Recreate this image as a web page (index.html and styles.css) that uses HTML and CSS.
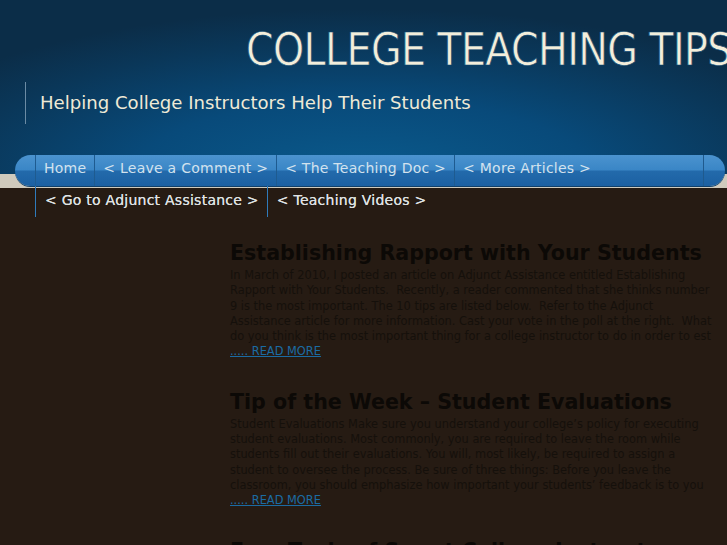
FILE: index.html
```html
<!DOCTYPE html>
<html lang="en">
<head>
<meta charset="utf-8">
<title>College Teaching Tips</title>
<link rel="stylesheet" href="styles.css">
</head>
<body>
<header class="masthead">
  <h1 class="site-title">COLLEGE TEACHING TIPS</h1>
  <p class="tagline">Helping College Instructors Help Their Students</p>
</header>
<div class="band"></div>
<nav class="menu">
  <ul class="menu-list">
    <li class="menu-item top"><a href="#">Home</a></li>
    <li class="menu-item top"><a href="#">&lt; Leave a Comment &gt;</a></li>
    <li class="menu-item top"><a href="#">&lt; The Teaching Doc &gt;</a></li>
    <li class="menu-item top"><a href="#">&lt; More Articles &gt;</a></li>
    <li class="menu-item low"><a href="#">&lt; Go to Adjunct Assistance &gt;</a></li>
    <li class="menu-item low"><a href="#">&lt; Teaching Videos &gt;</a></li>
  </ul>
</nav>
<div class="layout">
  <aside class="sidebar"></aside>
  <main class="content">
    <article class="post">
      <h2 class="post-title">Establishing Rapport with Your Students</h2>
      <p class="excerpt">In March of 2010, I posted an article on Adjunct Assistance entitled Establishing Rapport with Your Students.&nbsp; Recently, a reader commented that she thinks number 9 is the most important. The 10 tips are listed below.&nbsp; Refer to the Adjunct Assistance article for more information. Cast your vote in the poll at the right.&nbsp; What do you think is the most important thing for a college instructor to do in order to est</p>
      <a class="more" href="#">..... READ MORE</a>
    </article>
    <article class="post">
      <h2 class="post-title">Tip of the Week – Student Evaluations</h2>
      <p class="excerpt">Student Evaluations Make sure you understand your college’s policy for executing student evaluations. Most commonly, you are required to leave the room while students fill out their evaluations. You will, most likely, be required to assign a student to oversee the process. Be sure of three things: Before you leave the classroom, you should emphasize how important your students’ feedback is to you</p>
      <a class="more" href="#">..... READ MORE</a>
    </article>
    <article class="post">
      <h2 class="post-title">Free Tools of Smart College Instructors</h2>
    </article>
  </main>
</div>
</body>
</html>
```
FILE: styles.css
```css
html, body {
  margin: 0;
  padding: 0;
}
body {
  background: #261b13;
  font-family: "DejaVu Sans", Verdana, sans-serif;
  overflow: hidden;
  width: 727px;
  height: 545px;
}
.masthead {
  height: 174px;
  box-sizing: border-box;
  padding-top: 24px;
  background:
    radial-gradient(ellipse 70% 95% at 50% 100%, #0a5a8c 0%, #084a7a 45%, #0a3759 80%, #0b2d48 100%);
  overflow: hidden;
}
.site-title {
  margin: 0 0 0 246px;
  font-family: "DejaVu Sans Condensed", "DejaVu Sans", sans-serif;
  font-weight: normal;
  font-size: 44px;
  line-height: 52px;
  color: #f3eedb;
  white-space: nowrap;
  letter-spacing: -0.6px;
  -webkit-text-stroke: 0.6px #0a4774;
}
.tagline {
  margin: 6px 0 0 25px;
  padding: 10px 0 10px 14px;
  border-left: 1px solid #6b8ba4;
  font-size: 18.1px;
  line-height: 22px;
  color: #efead6;
}
.band {
  height: 14px;
  background: #cfcabd;
}
.menu {
  position: relative;
  margin-top: -33px;
  padding: 0 24px 0 35px;
}
.menu::before {
  content: "";
  position: absolute;
  left: 15px;
  right: 2px;
  top: 0;
  height: 31px;
  border-radius: 16px;
  background:
    linear-gradient(#1f5a8e, #1f5a8e) no-repeat right 21px top / 1px 100%,
    linear-gradient(#4b93cf 0%, #3a86c6 48%, #236aab 52%, #1b60a2 100%);
  box-shadow: 0 1px 0 #10406a;
}
.menu-list {
  position: relative;
  list-style: none;
  margin: 0;
  padding: 0;
  display: flex;
  flex-wrap: wrap;
}
.menu-item {
  height: 31px;
  box-sizing: border-box;
  padding: 0 8px 5px 8px;
  display: flex;
  align-items: center;
}
.menu-item a {
  font-size: 14px;
  letter-spacing: 0.25px;
  text-decoration: none;
  white-space: nowrap;
}
.menu-item.top {
  border-left: 1px solid #1e5b90;
}
.menu-item.top a {
  color: #d3e2ee;
}
.menu-item.low {
  border-left: 1px solid #2f7bbb;
  padding-left: 9px;
  padding-bottom: 3px;
}
.menu-item.low a {
  color: #dfe2e3;
  text-shadow: 0 0 0.6px #dfe2e3;
}
.layout {
  display: grid;
  grid-template-columns: 230px 486px;
  padding-top: 23px;
}
.post {
  margin-bottom: 29px;
}
.post-title {
  margin: 0;
  font-size: 20.6px;
  line-height: 26px;
  font-weight: bold;
  color: #0c0906;
}
.excerpt {
  margin: 2px 0 0;
  font-size: 11.4px;
  line-height: 15.3px;
  color: #15100b;
}
.more {
  display: block;
  font-size: 11.4px;
  line-height: 15.3px;
  color: #1b6ba3;
}
```
